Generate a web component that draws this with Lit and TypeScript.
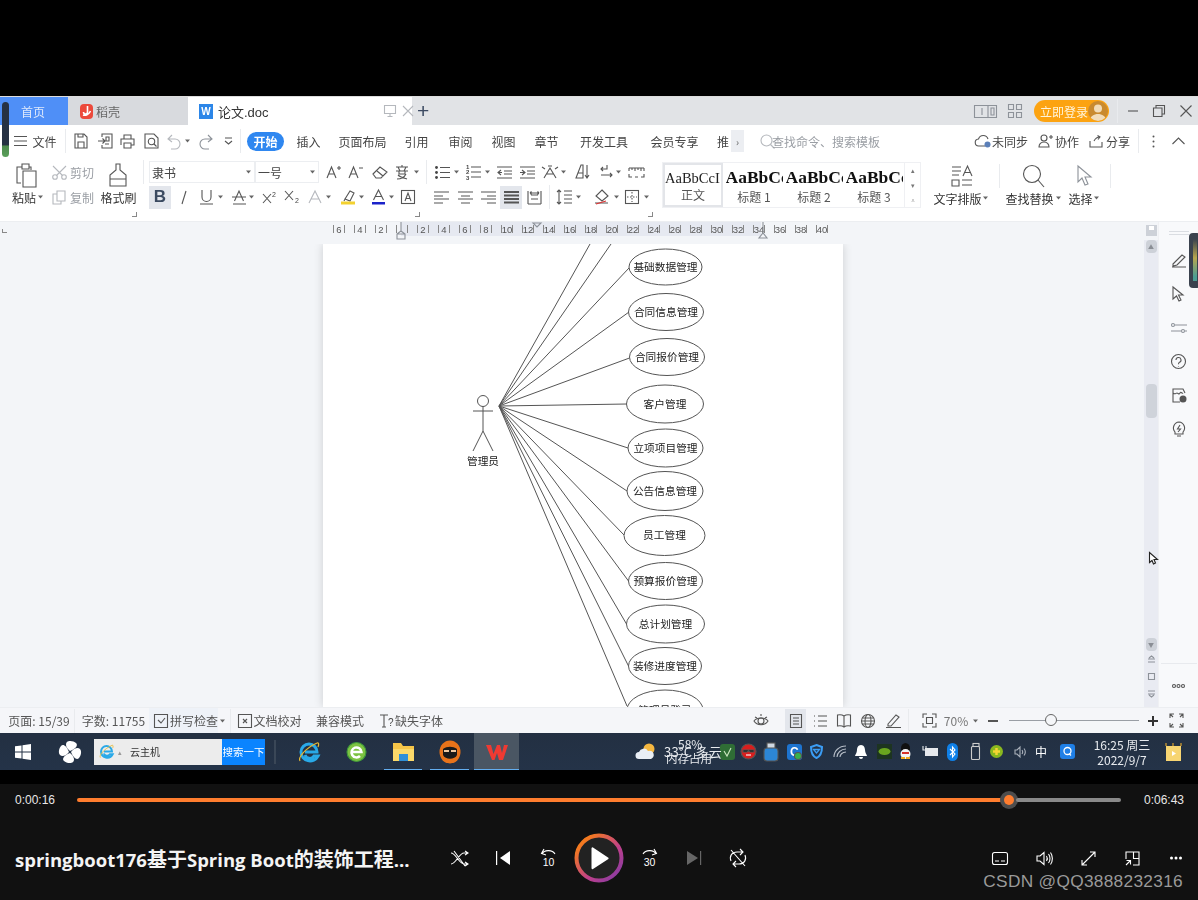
import { LitElement, html, css, svg, TemplateResult } from "lit";
import { customElement } from "lit/decorators.js";

type Item = [number, number, unknown];
const R = (items: Item[], cls = "row", origin = 0) => {
  let cur = origin;
  return html`<div class=${cls}>${items.map(([x, w, c]) => {
    const m = x - cur;
    cur = x + w;
    return html`<span class="it" style="margin-left:${m}px;width:${w}px">${c}</span>`;
  })}</div>`;
};
const I = (w: number, h: number, body: unknown, cls = "") =>
  html`<svg class="ic ${cls}" width=${w} height=${h} viewBox="0 0 ${w} ${h}">${body}</svg>`;
const P = (d: string) => svg`<path d=${d}/>`;
const caret = html`<svg class="ic" width="5" height="4" viewBox="0 0 5 4"><path d="M0 .5h5L2.5 3.5z" fill="#666" stroke="none"/></svg>`;
const sep = html`<i class="sep"></i>`;

/* menu bar icons */
const ic = {
  burger: I(14, 12, P("M0 1.5h13M0 6h13M0 10.5h13")),
  save: I(14, 16, P("M1 1h9l3 3v11H1zM4 15V9h6v6M4 1v3h5V1")),
  saveas: I(15, 16, P("M4 4V1h10v14H4v-3M0 8h7M4.5 5.5 7 8l-2.5 2.5M8 4h3v4H8zM7 11h4")),
  print: I(15, 15, P("M4 5V1h7v4M1 11V5h13v6h-3M4 9h7v5H4z")),
  undo: I(14, 15, P("M5 1 1 5l4 3M1 5h7a5 5 0 0 1 0 10H4"), "lt"),
  redo: I(14, 15, P("M9 1l4 4-4 3M13 5H6a5 5 0 0 0 0 10h4"), "lt2"),
  more: I(9, 9, P("M1 1h7M1 4l3.5 3L8 4")),
  search: I(15, 15, svg`<circle cx="6.5" cy="6.5" r="5.5"/><path d="m10.5 10.5 4 4"/>`, "lt"),
  cloud: I(16, 14, svg`<path d="M10 12H4a3.5 3.5 0 0 1-.5-7A5 5 0 0 1 13 5"/><circle cx="12.5" cy="10.5" r="3" fill="#5b7fb8" stroke="none"/>`),
  person: I(15, 14, svg`<circle cx="6" cy="4" r="3"/><path d="M1 13c0-3 2-5 5-5s5 2 5 5zM11 3h4M13 1v4"/>`),
  share: I(14, 13, P("M1 6v6h12V7M5 6c1-2 3-4 6-4M8.500 .5 11 2 9 4.500")),
  dots: I(3, 13, svg`<circle cx="1.500" cy="1.500" r="1" fill="#555" stroke="none"/><circle cx="1.500" cy="6.500" r="1" fill="#555" stroke="none"/><circle cx="1.500" cy="11.500" r="1" fill="#555" stroke="none"/>`),
  up: I(13, 8, P("M.5 7 6.500 1l6 6")),
};
const previewIcon = I(15, 16, svg`<path d="M1 1h9l4 4v10H1z"/><circle cx="7.500" cy="8.500" r="3.200"/><path d="m10 11 2.500 2.500"/>`);

/* ribbon */
const rb = {
  paste: I(22, 25, P("M6 4H1v16h4M6 1h7v5H6zM13 4h2v3M7 8h13v16H7z")),
  scissors: I(15, 15, svg`<circle cx="3" cy="12" r="2.300"/><circle cx="12" cy="12" r="2.300"/><path d="M1 1l9.500 9.500M14 1 4.500 10.500"/>`, "lt"),
  copy: I(14, 15, P("M5 1h8v10H5zM5 4H1v10h8v-3"), "lt"),
  brush: I(22, 25, P("M9 1h4v6l6 5v11H3V12l6-5zM3 16h16")),
  aplus: I(15, 14, P("M1 13 5.500 2 10 13M3 9h5M11 3h4M13 1v4")),
  aminus: I(15, 14, P("M1 13 5.500 2 10 13M3 9h5M11 3h4")),
  eraser: I(16, 14, P("M1 9l7-7 7 5-6 6H4zM5 6l6 5")),
  wen: I(16, 16, P("M8 1v2M2 3h12M4 3l2 4M12 3l-2 4M2 7h12M5 7v3h6V7M3 15c4 0 7-1 9-5M4 11c2 2 6 3 9 4")),
  italic: I(10, 15, P("M7 1 3 14"), ""),
  under: I(13, 16, P("M2 1v7a4.500 4.500 0 0 0 9 0V1M0 15h13")),
  strike: I(15, 15, P("M2.500 11 7 1l4.500 10M0 7h14M1 14h13")),
  sup: I(16, 13, svg`<path d="M1 3l8 9M9 3l-8 9"/><text x="10" y="6" class="tiny">2</text>`),
  sub: I(17, 14, svg`<path d="M1 1l8 9M9 1l-8 9"/><text x="11" y="13" class="tiny">2</text>`),
  ghost: I(14, 14, P("M1 13 7 1l6 12M3.500 9h7"), "lt"),
  hl: I(17, 16, svg`<path d="M5 10 10 2l4 2-4 8zM5 10l-1 2"/><rect x="1" y="12.500" width="14" height="3" fill="#f3d130" stroke="none"/>`),
  color: I(13, 16, svg`<path d="M1.500 11 6.500 1l5 10M3.500 7.500h6"/><rect x="0" y="13" width="13" height="2.500" fill="#1b22c9" stroke="none"/>`),
  boxa: I(14, 14, svg`<rect x=".5" y=".5" width="13" height="13"/><path d="M4 11 7 3l3 8M5 8.500h4"/>`),
  bullets: I(15, 15, svg`<path d="M5 2.500h10M5 7.500h10M5 12.500h10"/><circle cx="1.500" cy="2.500" r="1.400" fill="#444" stroke="none"/><circle cx="1.500" cy="7.500" r="1.400" fill="#444" stroke="none"/><circle cx="1.500" cy="12.500" r="1.400" fill="#444" stroke="none"/>`),
  nums: I(15, 16, svg`<path d="M5 3h10M5 8h10M5 13h10"/><text x="0" y="5" class="tiny b">1</text><text x="0" y="10" class="tiny b">2</text><text x="0" y="16" class="tiny b">3</text>`),
  out: I(15, 13, P("M0 1h15M7 5h8M7 8h8M0 12h15M4 4 1 6.500 4 9M1 6.500h4")),
  ind: I(15, 13, P("M0 1h15M7 5h8M7 8h8M0 12h15M2 4l3 2.500L2 9M0 6.500h5")),
  asian: I(16, 14, P("M2 13 8 3l6 10M4 9h8M0 2l3 2M16 2l-3 2M6 1h4")),
  sort: I(16, 16, P("M1 14 6 1h2v13zM3 9h5M12 1v13M10 11l2 3 2-3")),
  newline: I(13, 14, P("M7 0v4H1M3 2 1 4l2 2M1 10h11M10 8l2 2-2 2")),
  ruler: I(17, 11, P("M1 1h15M1 1v3M4 1v2M7 1v3M10 1v2M13 1v3M16 1v3M1 7v3h3M16 7v3h-3M7 10h3")),
  left: I(15, 13, P("M0 1h15M0 5h9M0 8h15M0 12h9")),
  center: I(15, 13, P("M0 1h15M3 5h9M0 8h15M3 12h9")),
  right: I(15, 13, P("M0 1h15M6 5h9M0 8h15M6 12h9")),
  just: I(15, 13, P("M0 1h15M0 4.500h15M0 8h15M0 11.500h15"), "bold"),
  dist: I(15, 15, P("M1 1v13M14 1v13M1 14h13M4 5h7M4 9h7M3 3h9M3 3l1.500-1.500M3 3l1.500 1.500M12 3l-1.500-1.500M12 3l-1.500 1.500")),
  spacing: I(16, 16, P("M3 1v14M1 3l2-2 2 2M1 13l2 2 2-2M8 2h8M8 6h8M8 10h8M8 14h8")),
  shade: I(17, 16, svg`<path d="M8 1 14 7 8 12 2 7zM1 14h13"/><path d="M2 15l10-3" stroke="#d33"/>`),
  border: I(14, 14, svg`<rect x=".5" y=".5" width="13" height="13"/><path d="M7 2v10M2 7h10" stroke-dasharray="1.500 1.500"/>`),
  typeset: I(22, 23, svg`<path d="M1 2h9M1 6h9M1 10h7M12 11 16.500 1 21 11M13.500 7.500h6M1 15h7v6H1zM11 15h10M11 20h10"/>`),
  find: I(23, 24, svg`<circle cx="10" cy="10" r="8.500"/><path d="m16 16 6 7"/>`),
  select: I(16, 22, P("M1 1v16l4-4 3 7 3-1-3-7h6z"), "lt2"),
};

/* player */
const pl = {
  shuffle: I(18, 17, P("M0 3c5 0 8 11 13 11h4M0 14c5 0 8-11 13-11h4M14 1l3 2-3 2M14 12l3 2-3 2M3 1l11 15")),
  prev: I(16, 16, svg`<rect x="0" y="1" width="1.200" height="14" fill="#fff" stroke="none"/><path d="M14 1v14L4 8z" fill="#fff" stroke="none"/>`),
  back: I(16, 20, svg`<path d="M2 6c2-4 10-5 13 0M4 1 1.500 5.500 6 7"/><text x="8.500" y="18" class="num" text-anchor="middle">10</text>`),
  fwd: I(16, 20, svg`<path d="M14 6C12 2 4 1 1 6M12 1l2.500 4.500L10 7"/><text x="7.500" y="18" class="num" text-anchor="middle">30</text>`),
  next: I(16, 16, svg`<path d="M1 1v14L12 8z" fill="#666" stroke="none"/><rect x="14" y="1" width="1.200" height="14" fill="#666" stroke="none"/>`),
  loop: I(18, 18, P("M2 12c-2-5 1-9 6-9h6M11 0l3 3-3 3M16 6c2 5-1 9-6 9H4M7 12l-3 3 3 3M2 1l14 16")),
  sub: I(16, 13, svg`<rect x=".5" y=".5" width="15" height="12" rx="2"/><path d="M3 9h4M9 9h4"/>`),
  vol: I(16, 15, P("M1 5v5h3l4 3.500v-12L4 5zM10.500 5c1 1.500 1 3.500 0 5M12.500 3c2 2.500 2 6.500 0 9M14.500 1.500c2.500 3.500 2.500 8.500 0 12")),
  full: I(15, 15, P("M9 1h5v5M14 1 1 14M1 9v5h5")),
  pip: I(15, 15, P("M1 8V1h13v13H8M8.500 1v6.500H14M1 14l4.500-4.500M1.500 9.500h4v4")),
  more: I(12, 4, svg`<circle cx="1.500" cy="2" r="1.500" fill="#fff" stroke="none"/><circle cx="6" cy="2" r="1.500" fill="#fff" stroke="none"/><circle cx="10.500" cy="2" r="1.500" fill="#fff" stroke="none"/>`),
};

const playBtn = html`<svg width="50" height="50" viewBox="0 0 50 50" class="ic">
  <defs><linearGradient id="rg" x1="0" y1="0" x2="1" y2="1"><stop offset=".15" stop-color="#f47a1f"/><stop offset=".6" stop-color="#c0408a"/><stop offset="1" stop-color="#7c3aa8"/></linearGradient></defs>
  <circle cx="25" cy="25" r="22.500" fill="#222" stroke="url(#rg)" stroke-width="4"/>
  <path d="M17.500 15.500a1 1 0 0 1 1.500-1l15 10a1 1 0 0 1 0 1.800l-15 9.700a1 1 0 0 1-1.500-1z" fill="#fff" stroke="none"/></svg>`;

/* taskbar art */
const tb = {
  win: html`<svg class="ic" width="16" height="16" viewBox="0 0 16 16"><path d="M0 2.300 6.500 1.400V7.500H0zM7.500 1.200 16 0v7.500H7.500zM0 8.500h6.500v6.100L0 13.700zM7.500 8.500H16V16l-8.500-1.200z" fill="#fff" stroke="none"/></svg>`,
  fan: html`<svg class="ic" width="22" height="22" viewBox="0 0 22 22"><path d="M11 10C7 7 6 3 8 1s7-1 9 1 1 5-6 8zM12 11c3-4 7-5 9-3s1 7-1 9-5 1-8-6zM11 12c4 3 5 7 3 9s-7 1-9-1-1-5 6-8zM10 11c-3 4-7 5-9 3s-1-7 1-9 5-1 8 6z" fill="#fff" stroke="none"/></svg>`,
  ie: (s: number) => html`<svg class="ic" width=${s} height=${s} viewBox="0 0 22 22"><path d="M3 11a8 8 0 0 1 16 0H7M7 14a5 5 0 0 0 9 1h4a9 9 0 0 1-17-4" fill="none" stroke="#29a9e8" stroke-width="3"/><path d="M2 20c-2-3 4-12 17-18 2-1 2 2 1 4" fill="none" stroke="#e6b932" stroke-width="1.200"/></svg>`,
  ge: html`<svg class="ic" width="21" height="22" viewBox="0 0 21 22"><circle cx="10.500" cy="11" r="9.500" fill="#7dc242" stroke="#3f9a3a"/><path d="M5.500 11h10a5 5 0 1 0-1.500 4" fill="none" stroke="#fff" stroke-width="2.500"/></svg>`,
  folder: html`<svg class="ic" width="21" height="20" viewBox="0 0 21 20"><path d="M0 1h8l2 3h11v15H0z" fill="#f6c548" stroke="none"/><rect x="0" y="7" width="21" height="12" fill="#fbd96a" stroke="none"/><rect x="6" y="12" width="9" height="7" fill="#2f8fd8" stroke="none"/></svg>`,
  cat: html`<svg class="ic" width="22" height="24" viewBox="0 0 22 24"><ellipse cx="11" cy="12" rx="10.500" ry="11.500" fill="#e8731a" stroke="none"/><path d="M4 9c4-3 10-3 14 0v6c-2 5-12 5-14 0z" fill="#1a1a1a" stroke="none"/><path d="M5 10h5v2H5zM12 10h5v2h-5z" fill="#f0c9a0" stroke="none"/></svg>`,
  wps: html`<svg class="ic" width="24" height="20" viewBox="0 0 24 20"><path d="M1 3h5l2.500 9L12 3h3l2 8 2-8h4l-5 15h-4l-2-7-2.500 7H7z" fill="#ee3a32" stroke="none"/></svg>`,
};
const sq = (c: string, body: unknown = "") => html`<svg class="ic" width="15" height="18" viewBox="0 0 15 18"><rect x="0" y="1" width="15" height="16" rx="3" fill=${c} stroke="none"/>${body}</svg>`;
const tray = {
  cloud: html`<svg class="ic" width="21" height="17" viewBox="0 0 21 17"><circle cx="14" cy="6" r="5.500" fill="#f4b740" stroke="none"/><path d="M4 16a3.500 3.500 0 0 1 0-7 5 5 0 0 1 9-1 4 4 0 0 1 3 8z" fill="#e9eef5" stroke="none"/></svg>`,
  green: sq("#2f6d35", svg`<path d="M4 8l3 5 4-8" stroke="#cde8c0" fill="none"/>`),
  red: html`<svg class="ic" width="15" height="15" viewBox="0 0 15 15"><circle cx="7.500" cy="7.500" r="7.500" fill="#d81e1e"/><path d="M2 6h11v2H9L7.500 7 6 8H2z" fill="#111"/><path d="M5 11h5" stroke="#fff"/></svg>`,
  usb: html`<svg class="ic" width="14" height="18" viewBox="0 0 14 18"><rect x="3" y="0" width="8" height="6" fill="#cfd8e3"/><rect x="0" y="5" width="14" height="13" rx="3" fill="#2c86d6"/></svg>`,
  c: sq("#1d74d0", svg`<text x="3" y="13" class="trayt">C</text><circle cx="11" cy="13" r="3.500" fill="#37b24d"/>`),
  shield: html`<svg class="ic" width="13" height="15" viewBox="0 0 13 15"><path d="M6.500 1 12 3c0 5-1 9-5.500 11C2 12 1 8 1 3z" fill="none" stroke="#3b9df5" stroke-width="2"/><path d="M3.500 5.500h6L6.500 9z" fill="none" stroke="#3b9df5" stroke-width="1.300"/></svg>`,
  wifi: html`<svg class="ic" width="14" height="13" viewBox="0 0 14 13"><path d="M1 12C1 6 6 1 13 1M4 12c0-4 4-8 9-8M7 12c0-2 2-5 6-5" fill="none" stroke="#b7bec8"/></svg>`,
  bell: html`<svg class="ic" width="12" height="14" viewBox="0 0 12 14"><path d="M6 0c3 0 4 3 4 5 0 3 2 5 2 6H0c0-1 2-3 2-6 0-2 1-5 4-5zM4 12h4a2 2 0 0 1-4 0z" fill="#fff" stroke="none"/></svg>`,
  nv: html`<svg class="ic" width="15" height="15" viewBox="0 0 15 15"><rect width="15" height="15" fill="#1d3420" stroke="none"/><ellipse cx="7.500" cy="7.500" rx="6" ry="3.500" fill="#6aa51f" stroke="none"/></svg>`,
  qq: html`<svg class="ic" width="13" height="17" viewBox="0 0 13 17"><ellipse cx="6.500" cy="5.500" rx="4.500" ry="5.500" fill="#111" stroke="none"/><ellipse cx="6.500" cy="11" rx="5" ry="5" fill="#f4f4f4" stroke="none"/><path d="M3 9h7v2H3z" fill="#d8322a" stroke="none"/><path d="M2 15h4M7 15h4" stroke="#f0a81c" stroke-width="2"/></svg>`,
  dev: html`<svg class="ic" width="16" height="13" viewBox="0 0 16 13"><rect x="3" y="3" width="13" height="8" fill="#e6e8ec" stroke="none"/><path d="M1 1v4h3V1" stroke="#e6e8ec" fill="none"/></svg>`,
  bt: html`<svg class="ic" width="11" height="18" viewBox="0 0 11 18"><rect width="11" height="18" rx="5.500" fill="#0f80e8" stroke="none"/><path d="M3 6l5 5-2.500 3V4L8 7l-5 5" stroke="#fff" fill="none"/></svg>`,
  stick: html`<svg class="ic" width="10" height="17" viewBox="0 0 10 17"><rect x="2" y=".5" width="6" height="3" fill="none" stroke="#ccc"/><rect x=".5" y="3.500" width="8" height="13" rx="1" fill="none" stroke="#ccc"/></svg>`,
  g2: html`<svg class="ic" width="13" height="13" viewBox="0 0 13 13"><circle cx="6.500" cy="6.500" r="6.500" fill="#8ab81f" stroke="none"/><path d="M3 6.500h7M6.500 3v7" stroke="#f6d532" stroke-width="2.500"/></svg>`,
  spk: html`<svg class="ic" width="13" height="12" viewBox="0 0 13 12"><path d="M1 4v4h2l3 3V1L3 4zM8 4c.7 1 .7 3 0 4M10 2.500c1.500 2 1.500 5 0 7" fill="none" stroke="#aab1bb"/></svg>`,
  q: html`<svg class="ic" width="15" height="15" viewBox="0 0 15 15"><rect width="15" height="15" rx="3" fill="#1f7fe6" stroke="none"/><circle cx="7.500" cy="7" r="3.500" fill="none" stroke="#fff" stroke-width="1.300"/><path d="m9 9.500 2 2" stroke="#fff" stroke-width="1.300"/></svg>`,
  note: html`<svg class="ic" width="17" height="18" viewBox="0 0 17 18"><rect x="1" y="3" width="15" height="15" fill="#f7d572" stroke="none"/><path d="M1 0v3M8 0v3M16 0v3" stroke="#e9a92b"/><path d="M7 8l4 2.500L7 13z" fill="#fff" stroke="none"/></svg>`,
};

/* diagram */
const hub = [499, 406];
const ellipses: [number, number, number, number, string, number, number][] = [
  [665.5, 267, 36.5, 18, "基础数据管理", 629, 268],
  [666, 312, 37.5, 18.5, "合同信息管理", 629, 312],
  [667, 357, 37.5, 18.5, "合同报价管理", 629.5, 358],
  [665, 404, 38.5, 19, "客户管理", 627, 404],
  [665.5, 448, 37.5, 19, "立项项目管理", 628, 448],
  [665, 491, 38, 19.5, "公告信息管理", 627, 491],
  [664.5, 535.5, 40.5, 20, "员工管理", 624, 535],
  [665.5, 581, 37, 18.5, "预算报价管理", 628.500, 581],
  [665.5, 624, 39, 19, "总计划管理", 626.500, 624],
  [665, 666, 36.5, 18.5, "装修进度管理", 628.500, 666],
  [665, 710, 38, 20, "管理员登录", 627, 706],
];
const rulerNums = [6, 4, 2, 0, 2, 4, 6, 8, 10, 12, 14, 16, 18, 20, 22, 24, 26, 28, 30, 32, 34, 36, 38, 40];

@customElement("app-root")
export class AppRoot extends LitElement {
  static styles = css`
    :host { display: block; position: relative; width: 1198px; height: 900px; background: #000; overflow: hidden;
      font-family: "Noto Sans CJK SC", "Liberation Sans", sans-serif; font-size: 12px; color: #444; }
    * { box-sizing: border-box; }
    svg.ic { display: block; flex: none; fill: none; stroke: #555; stroke-width: 1.100; overflow: visible; }
    svg.lt { stroke: #b5b8bd; }
    svg.lt2 { stroke: #8d9299; }
    svg.bold { stroke-width: 1.800; }
    .tiny { font: 7px "Liberation Sans", sans-serif; fill: #444; stroke: none; }
    .tiny.b { font-weight: 700; font-size: 6px; }
    .num { font: 10.500px "Liberation Sans", sans-serif; fill: #fff; stroke: none; }
    .trayt { font: 700 12px "Liberation Sans", sans-serif; fill: #fff; stroke: none; }
    .row { display: flex; align-items: center; }
    .it { flex: none; display: flex; align-items: center; justify-content: center; white-space: nowrap; }
    .sep { display: block; width: 1px; height: 24px; background: #e9ebee; }
    .top { height: 96px; background: #000; }
    .window { height: 637px; display: flex; flex-direction: column; background: #fff; filter: blur(.35px); border-top: 1px solid #ddd; }

    .tabs { height: 28px; background: #e1e3e6; }
    .tab { height: 28px; align-self: stretch; display: flex; align-items: center; width: 100%; }
    .tab.home { background: #4f8ff7; color: #dfe9fb; justify-content: center; padding-right: 2px; }
    .tab.dk { background: #d8dade; color: #666; padding-left: 12px; gap: 3px; }
    .tab.act { background: #fff; color: #333; padding-left: 11px; gap: 5px; font-size: 13px; }
    .tab.act span { font-family: "Liberation Sans", "Noto Sans CJK SC", sans-serif; }
    .tabs .it { align-self: stretch; }
    .logo-d { width: 13px; height: 15px; background: #ec4a3c; border-radius: 4px; display: flex; align-items: center; justify-content: center; }
    .logo-w { width: 14px; height: 15px; background: #2c86e8; color: #fff; font: 700 10px "Liberation Sans"; display: flex; align-items: center; justify-content: center; }
    .plus { font: 400 21px "Liberation Sans", sans-serif; color: #3c4a62; }
    .login { width: 100%; height: 22px; background: #fca311; border-radius: 11px; color: #fff4da; display: flex; align-items: center; padding-left: 6px; justify-content: space-between; }
    .avatar { width: 20px; height: 20px; border-radius: 50%; background: #c98a2f; margin-right: 1px; overflow: hidden; }

    .menu { height: 32px; background: #fff; color: #444; }
    .pill { width: 100%; height: 19px; background: #2f87f0; color: #fff; border-radius: 10px; display: flex; align-items: center; justify-content: center; font-weight: 700; }
    .more-box { width: 100%; height: 22px; background: #eceef2; color: #666; display: flex; align-items: center; justify-content: center; font-size: 10px; }
    .g { color: #9a9ea4; }
    .d { color: #333; }

    .ribbon { height: 65px; display: flex; border-bottom: 1px solid #eceef1; background: #fff; padding-top: 2px; }
    .rleft { width: 655px; flex: none; }
    .r1 { height: 26px; display: flex; align-items: center; }
    .r2 { height: 24px; display: flex; align-items: center; }
    .r3 { height: 11px; display: flex; align-items: center; }
    .rr1 { height: 34px; display: flex; align-items: center; }
    .rr2 { height: 10px; display: flex; align-items: center; }
    .low { padding-top: 6px; display: block; }
    .launch { width: 5px; height: 5px; border-right: 1px solid #888; border-bottom: 1px solid #888; }
    .fbox { width: 100%; height: 22px; border: 1px solid #eceef1; display: flex; align-items: center; justify-content: space-between; padding: 0 3px 0 2px; font-size: 12px; color: #444; }
    .bbtn { width: 100%; height: 23px; background: #e3e6ec; display: flex; align-items: center; justify-content: center; }
    .bold-b { font: 700 17px "Liberation Sans", sans-serif; color: #3b4a60; }
    .gallery { margin: 3px 0 0 7px; width: 259px; height: 46px; border: 1px solid #eff0f3; display: flex; flex: none; }
    .gs { width: 60px; flex: none; display: flex; flex-direction: column; align-items: center; overflow: hidden; }
    .gs.on { border: 2px solid #e3e5e9; width: 60px; margin: 0 1px 0 0; }
    .gs .big { font: 700 17.500px "Liberation Serif", serif; color: #111; height: 26px; line-height: 29px; white-space: nowrap; width: 57px; overflow: hidden; }
    .gs.on .big { font: 400 14.500px "Liberation Serif", serif; color: #222; line-height: 27px; height: 24px; width: 56px; }
    .gs .lab { font-size: 12px; color: #555; line-height: 20px; }
    .gscroll { width: 17px; margin-left: auto; border-left: 1px solid #eff0f3; display: flex; flex-direction: column; align-items: center; justify-content: space-around; color: #777; font-size: 7px; }
    .rright { flex: none; margin-left: 14px; width: 263px; }

    .main { flex: 1; display: flex; min-height: 0; background: #f3f5f8; }
    .docwrap { width: 1144px; display: flex; flex-direction: column; flex: none; }
    .ruler { height: 22px; flex: none; position: relative; }
    .ruler .row { height: 14px; font: 9.500px "Liberation Sans", sans-serif; color: #555;
      background: linear-gradient(to right, transparent 401px, #e6e9f1 401px, #e6e9f1 761px, transparent 761px); }
    .tick { width: 100%; display: flex; align-items: center; justify-content: space-between; }
    .tick::before, .tick::after { content: ""; width: 1px; height: 8px; background: #888; }
    .corner { position: absolute; left: 2px; top: 7px; width: 5px; height: 4px; border-left: 1px solid #888; border-bottom: 1px solid #888; }
    .mark { position: absolute; top: 0; }
    .doc { flex: 1; position: relative; overflow: hidden; padding-left: 323px; }
    .page { width: 520px; height: 100%; background: #fff; box-shadow: 0 0 9px rgba(0,0,0,.16); }
    .page svg { display: block; }
    .dt { font: 10.700px "Noto Sans CJK SC", sans-serif; fill: #222; text-anchor: middle; dominant-baseline: central; stroke: none; }

    .sb { width: 14px; flex: none; display: flex; flex-direction: column; align-items: center; }
    .sb-head { height: 18px; flex: none; padding-top: 3px; }
    .sb-track { flex: 1; width: 14px; background: #e9ebf2; display: flex; flex-direction: column; align-items: center; }
    .sb-btn { width: 11px; height: 13px; border-radius: 4px; background: #cdd1d8; flex: none; display: flex; align-items: center; justify-content: center; color: #8a8e95; font-size: 6px; }
    .sb-thumb { width: 11px; height: 34px; border-radius: 4px; background: #cfd3da; margin-top: 131px; flex: none; }
    .sb-btn.down { margin-top: 220px; }
    .sb-mini { height: 17px; flex: none; display: flex; align-items: center; justify-content: center; }
    .side { width: 40px; flex: none; background: #f8f9fb; display: flex; flex-direction: column; align-items: center; border-left: 1px solid #eff0f3; }
    .grip { width: 20px; height: 4px; border-top: 1px solid #dadde2; border-bottom: 1px solid #dadde2; margin: 9px 0 9px; flex: none; }
    .side-ic { height: 33.600px; display: flex; align-items: center; justify-content: center; flex: none; }
    .side-foot { margin-top: auto; width: 36px; height: 44px; border-top: 1px solid #e8eaee; display: flex; align-items: center; justify-content: center; flex: none; }

    .status { height: 26px; flex: none; background: #f5f6f9; border-top: 1px solid #eceef1; color: #555; }
    .spell { width: 100%; height: 25px; background: #eef2f8; display: flex; align-items: center; gap: 2px; padding-left: 5px; }
    .viewon { width: 100%; height: 24px; background: #e3e6ec; display: flex; align-items: center; justify-content: center; }
    .slider { width: 100%; height: 1px; background: #9a9ea5; position: relative; }
    .knob { position: absolute; left: 36px; top: -6px; width: 12px; height: 12px; border: 1px solid #666; border-radius: 50%; background: #f5f6f9; }

    .taskbar { height: 37px; flex: none; background: linear-gradient(#233042, #243348); filter: blur(.3px); position: relative; color: #eef1f5; }
    .taskbar .row { height: 37px; }
    .tsearch { width: 100%; height: 26px; background: #ececec; display: flex; align-items: center; padding-left: 5px; color: #333; font-size: 10px; gap: 4px; }
    .tbtn { width: 100%; height: 26px; background: #0a84ff; color: #fff; display: flex; align-items: center; justify-content: center; font-size: 10.500px; }
    .tsep { width: 2px; height: 24px; background: #3a4757; display: block; }
    .tact { width: 100%; height: 37px; display: flex; align-items: center; justify-content: center; position: relative; }
    .tact.on { background: #4a5663; }
    .tact.u::after { content: ""; position: absolute; left: 0; right: 0; bottom: 0; height: 1.500px; background: #63aef0; }
    .wx { position: relative; width: 100%; height: 37px; color: #e8ebef; font-size: 12px; }
    .wx b { font-weight: 400; position: absolute; white-space: nowrap; }
    .wx .a { left: 0; top: 9px; letter-spacing: .2px; font-size: 13px; }
    .wx .b2 { left: 14px; top: 2px; font-size: 12px; }
    .wx .c { left: 2px; top: 17px; font-size: 11.500px; }
    .clock { display: flex; flex-direction: column; align-items: center; font-size: 12px; line-height: 15px; color: #e8ebef; }
    .zh { color: #fff; font-size: 12px; }
    .gap { height: 14px; flex: none; background: #000; }

    .player { height: 116px; flex: none; background: #111; color: #fff; position: relative; display: flex; flex-direction: column; }
    .prog { height: 32px; display: flex; align-items: center; flex: none; font: 12px "Liberation Sans", sans-serif; color: #e8e8e8; }
    .bar { height: 4px; border-radius: 2px; display: block; }
    .bar.o { width: 100%; background: #ff7d2e; }
    .bar.r { width: 100%; background: #8a8a8a; }
    .thumb { width: 18px; height: 18px; border-radius: 50%; background: #4d4d4d; display: flex; align-items: center; justify-content: center; }
    .thumb::after { content: ""; width: 10px; height: 10px; border-radius: 50%; background: #ff7d2e; }
    .ctl { height: 50px; margin-top: 17px; flex: none; }
    .ctl svg.ic { stroke: #fff; }
    .title { width: 100%; display: block; white-space: nowrap; font: 700 18.500px "Open Sans", "Noto Sans CJK SC", sans-serif; color: #f4f4f4; }
    .title b { font-size: 20px; font-weight: 700; font-family: "Noto Sans CJK SC", sans-serif; }
    .water { position: absolute; right: 15px; top: 87px; font: 17.300px "Liberation Sans", sans-serif; color: #9a9a9a; letter-spacing: .3px; }
    .widget { position: absolute; background: #3a424e; border-radius: 4px; overflow: hidden; filter: blur(.4px); }
    .w-left { left: 2px; top: 102px; width: 7px; height: 55px; background: linear-gradient(#263143 0, #263143 78%, #4f8a4f 80%, #5aa05a 100%); }
    .w-right { left: 1189px; top: 233px; width: 12px; height: 55px; }
    .w-right i { display: block; position: absolute; left: 4px; top: 6px; width: 4px; height: 42px; background: linear-gradient(#3a424e, #b7a64f 45%, #4c9d93 90%); }
    .cursor { position: absolute; left: 1149px; top: 552px; }
  `;

  private tabs() {
    return R([
      [0, 68, html`<div class="tab home">首页</div>`],
      [68, 120, html`<div class="tab dk"><i class="logo-d"><svg width="9" height="11" viewBox="0 0 9 11"><path d="M5.500 0v6a2 2 0 0 1-4 0M1 9c3 1 6-1 7.500-4" fill="none" stroke="#fff" stroke-width="1.600"/></svg></i>稻壳</div>`],
      [188, 224, html`<div class="tab act"><i class="logo-w">W</i><span>论文.doc</span></div>`],
      [384, 12, I(12, 12, P("M.5 .5h11v8H.5zM6 8.500v3M3.500 11.500h5"), "lt")],
      [403, 10, I(10, 10, P("M0 0l10 10M10 0 0 10"), "lt")],
      [417, 12, html`<span class="plus">+</span>`],
      [974, 23, I(23, 13, P("M.5 .5h22v12H.5zM14 .5v12M17 3h3v7h-3zM8 3v7"), "lt2")],
      [1008, 14, I(14, 14, P("M.5 .5h5v5h-5zM8.500 .5h5v5h-5zM.5 8.500h5v5h-5zM8.500 8.500h5v5h-5z"), "lt2")],
      [1034, 75, html`<div class="login">立即登录<i class="avatar"><svg width="20" height="20" viewBox="0 0 20 20"><circle cx="10" cy="7.500" r="4" fill="#f2dcb8"/><path d="M2 20c0-5 4-7 8-7s8 2 8 7z" fill="#f2dcb8"/></svg></i></div>`],
      [1117, 1, sep],
      [1128, 10, I(10, 2, P("M0 1h10"))],
      [1153, 12, I(12, 12, P("M3 3V.5h8.500V9H9M.5 3h8.500v8.500H.5z"))],
      [1180, 12, I(12, 12, P("M.5 .5l11 11M11.500 .5l-11 11"))],
    ], "row tabs");
  }

  private menu() {
    const items: [number, number, string][] = [[297, 23, "插入"], [340, 45, "页面布局"], [405, 23, "引用"], [449, 23, "审阅"], [492, 23, "视图"], [535, 23, "章节"], [581, 46, "开发工具"], [652, 45, "会员专享"]];
    return R([
      [14, 14, ic.burger],
      [33, 23, "文件"],
      [65, 1, sep],
      [74, 14, ic.save],
      [98, 15, ic.saveas],
      [120, 15, ic.print],
      [144, 15, previewIcon],
      [167, 14, ic.undo],
      [185, 5, caret],
      [199, 14, ic.redo],
      [224, 9, ic.more],
      [240, 1, sep],
      [247, 37, html`<div class="pill">开始</div>`],
      ...items.map(([x, w, t]) => [x, w, t] as Item),
      [717, 12, "推"],
      [731, 13, html`<div class="more-box">›</div>`],
      [760, 15, ic.search],
      [775, 102, html`<span class="g">查找命令、搜索模板</span>`],
      [975, 16, ic.cloud],
      [993, 34, "未同步"],
      [1038, 15, ic.person],
      [1055, 24, "协作"],
      [1089, 14, ic.share],
      [1107, 22, "分享"],
      [1138, 1, sep],
      [1152, 3, ic.dots],
      [1172, 13, ic.up],
    ], "row menu");
  }

  private ribbon() {
    const S = (c: string) => html`<span class="d">${c}</span>`;
    const low = (c: unknown) => html`<span class="low">${c}</span>`;
    return html`<div class="ribbon">
      <div class="rleft">
        ${R([
          [16, 22, low(rb.paste)],
          [52, 15, rb.scissors],
          [71, 22, html`<span class="g">剪切</span>`],
          [107, 22, low(rb.brush)],
          [143, 1, sep],
          [149, 106, html`<div class="fbox">隶书${caret}</div>`],
          [255, 64, html`<div class="fbox">一号${caret}</div>`],
          [326, 15, rb.aplus],
          [348, 15, rb.aminus],
          [372, 16, rb.eraser],
          [394, 16, rb.wen],
          [414, 5, caret],
          [426, 1, sep],
          [435, 15, rb.bullets],
          [454, 5, caret],
          [466, 15, rb.nums],
          [485, 5, caret],
          [497, 15, rb.out],
          [520, 15, rb.ind],
          [542, 16, rb.asian],
          [561, 5, caret],
          [575, 16, rb.sort],
          [600, 13, rb.newline],
          [616, 5, caret],
          [628, 17, rb.ruler],
        ], "r1")}
        ${R([
          [12, 24, S("粘贴")],
          [38, 5, caret],
          [52, 14, rb.copy],
          [71, 22, html`<span class="g">复制</span>`],
          [102, 33, S("格式刷")],
          [149, 22, html`<div class="bbtn"><span class="bold-b">B</span></div>`],
          [179, 10, rb.italic],
          [200, 13, rb.under],
          [218, 5, caret],
          [232, 15, rb.strike],
          [249, 5, caret],
          [262, 16, rb.sup],
          [284, 17, rb.sub],
          [308, 14, rb.ghost],
          [326, 5, caret],
          [340, 17, rb.hl],
          [359, 5, caret],
          [372, 13, rb.color],
          [389, 5, caret],
          [401, 14, rb.boxa],
          [434, 15, rb.left],
          [458, 15, rb.center],
          [481, 15, rb.right],
          [500, 22, html`<div class="bbtn">${rb.just}</div>`],
          [527, 15, rb.dist],
          [549, 1, sep],
          [556, 16, rb.spacing],
          [576, 5, caret],
          [594, 17, rb.shade],
          [614, 5, caret],
          [625, 14, rb.border],
          [644, 5, caret],
        ], "r2")}
        ${R([[132, 5, html`<i class="launch"></i>`], [415, 5, html`<i class="launch"></i>`], [648, 5, html`<i class="launch"></i>`]], "r3")}
      </div>
      <div class="gallery">
        <div class="gs on"><span class="big">AaBbCcI</span><span class="lab">正文</span></div>
        <div class="gs"><span class="big">AaBbCcI</span><span class="lab">标题 1</span></div>
        <div class="gs"><span class="big">AaBbCcI</span><span class="lab">标题 2</span></div>
        <div class="gs"><span class="big">AaBbCcI</span><span class="lab">标题 3</span></div>
        <div class="gscroll"><span>▴</span><span>▾</span><span>⩡</span></div>
      </div>
      <div class="rright">
        ${R([[951, 22, rb.typeset], [999, 1, sep], [1022, 23, rb.find], [1077, 16, rb.select], [1110, 1, sep]], "rr1", 935)}
        ${R([[935, 45, S("文字排版")], [983, 5, caret], [1006, 47, S("查找替换")], [1056, 5, caret], [1069, 23, S("选择")], [1094, 5, caret]], "rr2", 935)}
      </div>
    </div>`;
  }

  private ruler() {
    return html`<div class="ruler">
      <i class="corner"></i>
      ${R(rulerNums.map((n, i) => [333 + i * 21, 12, html`<span class="tick">${n === 0 ? "" : n}</span>`] as Item))}
      <span class="mark" style="left:396px">${I(10, 18, P("M5 0v10M1 12h8v5H1zM1 12l4-3 4 3"), "lt2")}</span>
      <span class="mark" style="left:533px">${I(8, 6, P("M0 1h8L4 5z"), "lt2")}</span>
      <span class="mark" style="left:759px">${I(8, 17, P("M4 0v11M0 16h8L4 11z"), "lt2")}</span>
    </div>`;
  }

  private diagram() {
    return svg`<svg width="520" height="463" viewBox="323 244 520 463" style="overflow:hidden" fill="none" stroke="#555" stroke-width="1">
      <path d="M499 406 590 244M499 406 611 244"/>
      ${ellipses.map(([cx, cy, rx, ry, t, ex, ey]) => svg`
        <path d="M${hub[0]} ${hub[1]}L${ex} ${ey}"/>
        <ellipse cx=${cx} cy=${cy} rx=${rx} ry=${ry} fill="#fff"/>
        <text class="dt" x=${cx} y=${cy - 1}>${t}</text>`)}
      <circle cx="483" cy="401" r="5.500"/>
      <path d="M483 406.500V431M473 411H493M483 431 473 451M483 431 493 451"/>
      <text class="dt" x="483" y="460">管理员</text>
    </svg>`;
  }

  private sidebar() {
    const side: TemplateResult[] = [
      I(16, 15, P("M1 14h14M2 11 11 2l3 2-8 8-4 1z")),
      I(14, 16, P("M1 1v12l3.500-3 2.500 5 2-1-2.500-5H11z")),
      I(16, 10, svg`<circle cx="2" cy="2" r="1.500"/><path d="M4 2h12M0 8h10"/><circle cx="12" cy="8" r="1.500"/><path d="M14 8h2"/>`, "lt2"),
      I(15, 15, svg`<circle cx="7.500" cy="7.500" r="7"/><path d="M5 6a2.500 2.500 0 1 1 3.500 2.300c-1 .5-1 1-1 2M7.500 12v.5"/>`),
      I(16, 15, svg`<path d="M2 5V1h10l2 4M2 5v9h7M2 5c2 2 3 0 4 0s2 2 3 0 2 1 3 0"/><circle cx="12" cy="11" r="3.500" fill="#555" stroke="none"/>`),
      I(14, 16, svg`<path d="M7 1a6 6 0 0 1 4 10v2H3v-2A6 6 0 0 1 7 1zM5 15h4"/><path d="M8 4 5.500 8h3L6 11"/>`),
    ];
    return html`
      <div class="sb">
        <div class="sb-head">${I(11, 11, svg`<rect width="11" height="11" fill="#cdd1d8" stroke="none"/><rect x="3" y="1" width="5" height="4" fill="#fff" stroke="none"/>`)}</div>
        <div class="sb-track">
          <span class="sb-btn">▲</span>
          <span class="sb-thumb"></span>
          <span class="sb-btn down">▼</span>
          <span class="sb-mini">${I(7, 7, P("M0 3h7M1 2 3.500 0 6 2M0 6h7"), "lt2")}</span>
          <span class="sb-mini">${I(7, 7, P("M.5 .5h6v6h-6z"), "lt2")}</span>
          <span class="sb-mini">${I(7, 7, P("M0 1h7M1 5l2.500 2L6 5M0 4h7"), "lt2")}</span>
        </div>
      </div>
      <div class="side">
        <i class="grip"></i>
        ${side.map((s) => html`<div class="side-ic">${s}</div>`)}
        <div class="side-foot">${I(13, 4, svg`<circle cx="2" cy="2" r="1.500"/><circle cx="6.500" cy="2" r="1.500"/><circle cx="11" cy="2" r="1.500"/>`)}</div>
      </div>`;
  }

  private status() {
    const check = I(14, 14, P("M.5 .5h13v13H.5zM4 6l3 3 4-5"));
    const x = I(14, 14, P("M.5 .5h13v13H.5zM5 5l4 4M9 5 5 9"));
    return R([
      [9, 60, "页面: 15/39"],
      [74, 1, sep],
      [82, 63, "字数: 11755"],
      [149, 69, html`<div class="spell">${check}<span>拼写检查</span></div>`],
      [220, 5, caret],
      [230, 1, sep],
      [238, 14, x],
      [255, 45, "文档校对"],
      [318, 44, "兼容模式"],
      [379, 14, I(14, 14, svg`<path d="M1 1h8M5 1v12M3 13h4"/><text x="9" y="12" class="tiny" style="font-size:10px">?</text>`)],
      [396, 46, "缺失字体"],
      [753, 16, I(16, 15, svg`<path d="M1 8c3-4 11-4 14 0-3 5-11 5-14 0z"/><circle cx="8" cy="8" r="3"/><path d="M2 4l2 1M14 4l-2 1M8 1v2"/>`)],
      [785, 21, html`<div class="viewon">${I(12, 14, P("M.5 .5h11v13H.5zM3 4h6M3 7h6M3 10h6"))}</div>`],
      [814, 13, I(13, 12, P("M4 1h9M4 6h9M4 11h9M0 1h1M0 6h1M0 11h1"))],
      [837, 14, I(14, 13, P("M7 2C5 .5 3 .5.5 1v11C3 11.500 5 11.500 7 13c2-1.500 4-1.500 6.500-1V1C11 .5 9 .5 7 2zM7 2v11"))],
      [861, 14, I(14, 14, svg`<circle cx="7" cy="7" r="6.500"/><ellipse cx="7" cy="7" rx="3" ry="6.500"/><path d="M.5 7h13M1.500 4h11M1.500 10h11"/>`)],
      [886, 15, I(15, 15, P("M0 14.500h15M2 11l8-9 3 2-8 9H2z"))],
      [908, 1, sep],
      [923, 13, I(13, 13, P("M0 4V0h4M9 0h4v4M13 9v4H9M4 13H0V9M3.500 3.500h6v6h-6z"))],
      [944, 24, html`<span style="color:#777">70%</span>`],
      [973, 5, caret],
      [988, 10, I(10, 2, svg`<path d="M0 1h10" stroke-width="2"/>`)],
      [1009, 130, html`<div class="slider"><i class="knob"></i></div>`],
      [1148, 10, I(10, 10, svg`<path d="M0 5h10M5 0v10" stroke-width="2" stroke="#333"/>`)],
      [1170, 13, I(13, 13, P("M0 4V0h4M0 0l3 3M9 0h4v4M13 0l-3 3M13 9v4H9M13 13l-3-3M4 13H0V9M0 13l3-3"))],
    ], "row status");
  }

  private taskbar() {
    return html`<div class="taskbar">${R([
      [15, 16, tb.win],
      [59, 22, tb.fan],
      [94, 128, html`<div class="tsearch">${tb.ie(15)}<span style="color:#999;font-size:7px">▴</span><span style="margin-left:4px">云主机</span></div>`],
      [222, 43, html`<div class="tbtn">搜索一下</div>`],
      [274, 2, html`<i class="tsep"></i>`],
      [298, 22, tb.ie(22)],
      [346, 21, tb.ge],
      [384, 38, html`<div class="tact u">${tb.folder}</div>`],
      [430, 39, html`<div class="tact u">${tb.cat}</div>`],
      [474, 45, html`<div class="tact on u">${tb.wps}</div>`],
      [635, 21, tray.cloud],
      [664, 56, html`<div class="wx"><b class="a">33°C 多云</b><b class="b2">58%</b><b class="c">内存占用</b></div>`],
      [720, 15, tray.green],
      [741, 15, tray.red],
      [764, 14, tray.usb],
      [787, 15, tray.c],
      [810, 13, tray.shield],
      [833, 14, tray.wifi],
      [855, 12, tray.bell],
      [877, 15, tray.nv],
      [899, 13, tray.qq],
      [922, 16, tray.dev],
      [947, 11, tray.bt],
      [971, 10, tray.stick],
      [990, 13, tray.g2],
      [1014, 13, tray.spk],
      [1035, 12, html`<span class="zh">中</span>`],
      [1060, 15, tray.q],
      [1094, 56, html`<div class="clock"><span>16:25 周三</span><span>2022/9/7</span></div>`],
      [1165, 17, tray.note],
    ])}</div>`;
  }

  private player() {
    return html`<div class="player">
      ${R([
        [16, 38, "0:00:16"],
        [77, 925, html`<i class="bar o"></i>`],
        [1000, 18, html`<i class="thumb"></i>`],
        [1016, 105, html`<i class="bar r"></i>`],
        [1145, 38, "0:06:43"],
      ], "prog")}
      ${R([
        [15, 400, html`<span class="title">springboot176<b>基于</b>Spring Boot<b>的装饰工程</b>...</span>`],
        [451, 18, pl.shuffle],
        [496, 16, pl.prev],
        [540, 16, pl.back],
        [574, 50, playBtn],
        [642, 16, pl.fwd],
        [686, 16, pl.next],
        [729, 18, pl.loop],
        [992, 16, pl.sub],
        [1036, 16, pl.vol],
        [1081, 15, pl.full],
        [1125, 15, pl.pip],
        [1170, 12, pl.more],
      ], "row ctl")}
      <div class="water">CSDN @QQ3888232316</div>
    </div>`;
  }

  render() {
    return html`
      <div class="top"></div>
      <div class="window">
        ${this.tabs()}
        ${this.menu()}
        ${this.ribbon()}
        <div class="main">
          <div class="docwrap">
            ${this.ruler()}
            <div class="doc"><div class="page">${this.diagram()}</div></div>
          </div>
          ${this.sidebar()}
        </div>
        ${this.status()}
      </div>
      ${this.taskbar()}
      <div class="gap"></div>
      ${this.player()}
      <i class="widget w-left"></i>
      <i class="widget w-right"><i></i></i>
      <span class="cursor">${I(9, 13, svg`<path d="M.5 .5v10l2.500-2 1.500 3.500 2-1L5 7.500h3.500z" fill="#fff" stroke="#222"/>`)}</span>
    `;
  }
}
